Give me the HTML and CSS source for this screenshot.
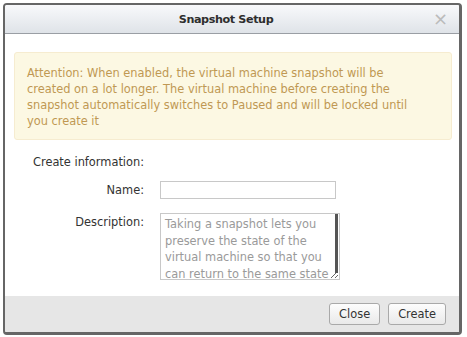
FILE: index.html
```html
<!doctype html>
<html>
<head>
  <meta charset="utf-8">
  <title>Snapshot Setup</title>
  <link rel="stylesheet" href="styles.css">
</head>
<body>

  <div class="dialog">
    <div class="dialog-header">
      <span class="dialog-title">Snapshot Setup</span>
      <span class="dialog-close">&times;</span>
    </div>

    <div class="dialog-body">
      <div class="alert">
        Attention: When enabled, the virtual machine snapshot will be
        created on a lot longer. The virtual machine before creating the
        snapshot automatically switches to Paused and will be locked until
        you create it
      </div>

      <div class="section-title">Create information:</div>

      <div class="form">
        <label class="form-label" for="name">Name:</label>
        <input class="form-input" id="name" type="text">

        <label class="form-label" for="desc">Description:</label>
        <div class="textarea-wrap">
          <textarea class="form-textarea" id="desc">Taking a snapshot lets you preserve the state of the virtual machine so that you can return to the same state later.</textarea>
          <span class="scroll-thumb"></span>
        </div>
      </div>
    </div>

    <div class="dialog-footer">
      <button class="btn">Close</button>
      <button class="btn">Create</button>
    </div>
  </div>

</body>
</html>
```

FILE: styles.css
```css
html, body {
  height: 100%;
}

body {
  margin: 0;
  background: #fff;
  font-family: "DejaVu Sans", Verdana, sans-serif;
  font-size: 11.4px;
  color: #333;
}

.dialog {
  box-sizing: border-box;
  display: flex;
  flex-direction: column;
  width: 459px;
  height: 332px;
  margin: 3px 0 0 3px;
  border: 2px solid #666;
  border-right-width: 3px;
  border-bottom-width: 3px;
  border-radius: 4px;
  overflow: hidden;
}

.dialog-header {
  position: relative;
  display: flex;
  justify-content: center;
  align-items: center;
  height: 28px;
  flex: none;
  padding-right: 12px;
  background: linear-gradient(#f8f9fb, #dfe3e8);
  border-bottom: 1px solid #9a9ea4;
}

.dialog-title {
  font-weight: bold;
  font-size: 11.2px;
  letter-spacing: -0.4px;
  color: #2e2e2e;
}

.dialog-close {
  position: absolute;
  right: 11px;
  top: 3px;
  font-size: 18px;
  color: #bbb;
}

.dialog-body {
  flex: 1;
  padding: 18px 7px 0 9px;
}

.alert {
  padding: 12px 40px 10px 12px;
  background: #fcf8e3;
  border: 1px solid #f6ecd0;
  border-radius: 3px;
  color: #c09853;
  line-height: 16px;
}

.section-title {
  margin: 15px 0 0 19px;
}

.form {
  display: grid;
  grid-template-columns: 130px auto;
  column-gap: 16px;
  row-gap: 14px;
  margin-top: 12px;
  align-items: start;
}

.form-label {
  text-align: right;
  padding-top: 2px;
}

.form-input {
  box-sizing: border-box;
  width: 176px;
  height: 18px;
  margin: 0;
  border: 1px solid #c8c8c8;
  padding: 1px 4px;
}

.textarea-wrap {
  position: relative;
  width: 180px;
  height: 67px;
}

.form-textarea {
  display: block;
  box-sizing: border-box;
  width: 180px;
  height: 67px;
  margin: 0;
  border: 1px solid #c8c8c8;
  padding: 2px 3px 0 4px;
  font-family: inherit;
  font-size: 11.4px;
  line-height: 16.5px;
  color: #9a9a9a;
  overflow: hidden;
  resize: both;
}

.scroll-thumb {
  position: absolute;
  top: 1px;
  right: 2px;
  width: 3px;
  height: 59px;
  background: #555;
}

.dialog-footer {
  display: flex;
  justify-content: flex-end;
  gap: 8px;
  height: 36px;
  flex: none;
  align-items: center;
  padding-right: 13px;
  background: #e6e6e6;
}

.btn {
  height: 22px;
  padding: 0 9px;
  border: 1px solid #a9a9a9;
  border-radius: 3px;
  background: linear-gradient(#fdfdfd, #e9e9e9);
  font-family: inherit;
  font-size: 11.4px;
  color: #333;
}
```
